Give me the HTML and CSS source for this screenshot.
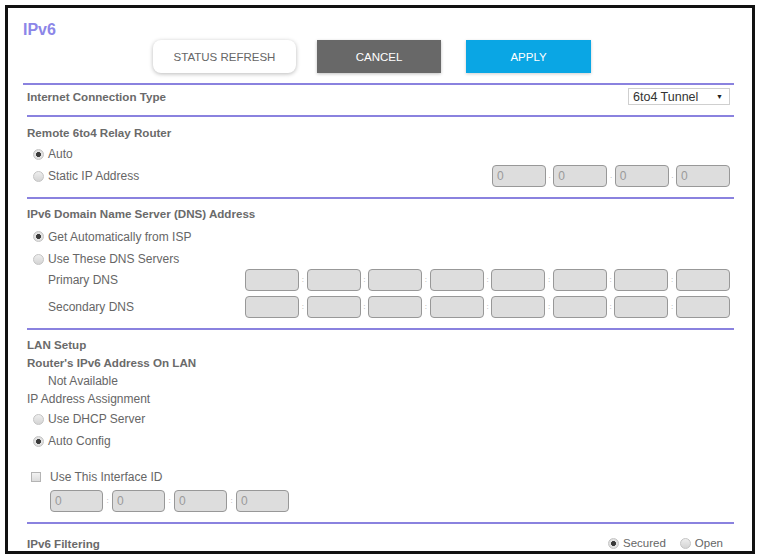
FILE: index.html
```html
<!DOCTYPE html>
<html>
<head>
<meta charset="utf-8">
<link rel="stylesheet" href="styles.css">
</head>
<body>
<div class="frame">
  <div class="page">
    <h1 class="title">IPv6</h1>
    <div class="actions">
      <button class="btn btn-refresh">STATUS REFRESH</button>
      <button class="btn btn-cancel">CANCEL</button>
      <button class="btn btn-apply">APPLY</button>
    </div>
    <div class="rule rule-first"></div>
    <div class="row row-ict">
      <span class="hd">Internet Connection Type</span>
      <div class="select"><span>6to4 Tunnel</span><span class="caret">&#9660;</span></div>
    </div>
    <div class="rule"></div>

    <section class="sec sec-relay">
      <div class="row"><span class="hd">Remote 6to4 Relay Router</span></div>
      <div class="row opt"><span class="radio on"></span>Auto</div>
      <div class="row opt"><span class="radio"></span>Static IP Address
        <div class="ipgroup ip4">
          <span class="field">0</span><span class="sep">.</span>
          <span class="field">0</span><span class="sep">.</span>
          <span class="field">0</span><span class="sep">.</span>
          <span class="field">0</span>
        </div>
      </div>
    </section>
    <div class="rule"></div>

    <section class="sec sec-dns">
      <div class="row"><span class="hd">IPv6 Domain Name Server (DNS) Address</span></div>
      <div class="row opt h25"><span class="radio on"></span>Get Automatically from ISP</div>
      <div class="row opt h20"><span class="radio"></span>Use These DNS Servers</div>
      <div class="row sub">Primary DNS
        <div class="ipgroup ip8">
          <span class="field"></span><span class="sep">:</span>
          <span class="field"></span><span class="sep">:</span>
          <span class="field"></span><span class="sep">:</span>
          <span class="field"></span><span class="sep">:</span>
          <span class="field"></span><span class="sep">:</span>
          <span class="field"></span><span class="sep">:</span>
          <span class="field"></span><span class="sep">:</span>
          <span class="field"></span>
        </div>
      </div>
      <div class="row sub sec-row">Secondary DNS
        <div class="ipgroup ip8">
          <span class="field"></span><span class="sep">:</span>
          <span class="field"></span><span class="sep">:</span>
          <span class="field"></span><span class="sep">:</span>
          <span class="field"></span><span class="sep">:</span>
          <span class="field"></span><span class="sep">:</span>
          <span class="field"></span><span class="sep">:</span>
          <span class="field"></span><span class="sep">:</span>
          <span class="field"></span>
        </div>
      </div>
    </section>
    <div class="rule"></div>

    <section class="sec sec-lan">
      <div class="line hd">LAN Setup</div>
      <div class="line hd">Router's IPv6 Address On LAN</div>
      <div class="line indent">Not Available</div>
      <div class="line">IP Address Assignment</div>
      <div class="row opt"><span class="radio"></span>Use DHCP Server</div>
      <div class="row opt"><span class="radio on"></span>Auto Config</div>
      <div class="row check-row"><span class="checkbox"></span>Use This Interface ID</div>
      <div class="row iid-row">
        <div class="ipgroup iid">
          <span class="field">0</span><span class="sep">:</span>
          <span class="field">0</span><span class="sep">:</span>
          <span class="field">0</span><span class="sep">:</span>
          <span class="field">0</span>
        </div>
      </div>
    </section>
    <div class="rule"></div>

    <section class="sec sec-filter">
      <div class="row">
        <span class="hd">IPv6 Filtering</span>
        <div class="choices">
          <span class="radio on"></span><span class="choice">Secured</span>
          <span class="radio"></span><span class="choice">Open</span>
        </div>
      </div>
    </section>
  </div>
</div>
</body>
</html>
```

FILE: styles.css
```css
html, body {
  margin: 0;
  padding: 0;
  background: #ffffff;
}

body {
  font-family: "Liberation Sans", Arial, sans-serif;
  color: #666666;
  font-size: 12px;
}

.frame {
  box-sizing: border-box;
  width: 750px;
  height: 549px;
  margin: 5px 0 0 5px;
  border: 3px solid #111111;
  overflow: hidden;
  background: #ffffff;
}

.page {
  padding: 0 18px 0 19px;
}

.title {
  margin: 0 0 0 -4px;
  padding-top: 12px;
  font-size: 16px;
  line-height: 20px;
  font-weight: bold;
  color: #8c86e8;
}

.actions {
  display: flex;
  height: 33px;
  margin-left: 126px;
}

.btn {
  box-sizing: border-box;
  height: 33px;
  border: 0;
  padding: 0;
  font-family: "Liberation Sans", Arial, sans-serif;
  font-size: 11.5px;
}

.btn-refresh {
  width: 143px;
  background: #ffffff;
  color: #666666;
  border-radius: 8px;
  box-shadow: 0 1px 4px rgba(0, 0, 0, 0.28);
}

.btn-cancel {
  width: 124px;
  margin-left: 21px;
  background: #686868;
  color: #ffffff;
  box-shadow: 0 1px 3px rgba(0, 0, 0, 0.25);
}

.btn-apply {
  width: 125px;
  margin-left: 25px;
  background: #0aa6e4;
  color: #ffffff;
  box-shadow: 0 1px 3px rgba(0, 0, 0, 0.2);
}

.rule {
  height: 2px;
  background: #8a82df;
}

.rule-first {
  margin: 10px 0 0 -4px;
}

.row {
  display: flex;
  align-items: center;
  height: 22px;
  white-space: nowrap;
}

.hd {
  font-weight: bold;
  font-size: 11.6px;
  color: #6a6a6a;
}

.row-ict {
  height: 23px;
  margin-bottom: 7px;
  justify-content: space-between;
}

.select {
  box-sizing: border-box;
  width: 102px;
  height: 17px;
  margin-right: 4px;
  border: 1px solid #cfcfcf;
  background: #ffffff;
  display: flex;
  align-items: center;
  justify-content: space-between;
  padding: 0 6px 0 4px;
  font-size: 12.5px;
  color: #333333;
}

.caret {
  font-size: 7px;
  color: #222222;
}

.sec-relay {
  padding: 4px 0 10px;
}

.sec-dns {
  padding: 3px 0 10px;
}

.sec-lan {
  padding: 6px 0 10px;
}

.sec-filter {
  padding-top: 8px;
}

.sec-filter .row {
  justify-content: space-between;
}

.opt {
  padding-left: 6px;
}

.h25 {
  height: 25px;
}

.h20 {
  height: 20px;
}

.sub {
  padding-left: 21px;
}

.sec-row {
  margin-top: 5px;
}

.radio {
  box-sizing: border-box;
  width: 11px;
  height: 11px;
  margin-right: 4px;
  border-radius: 50%;
  border: 1px solid #c4c4c4;
  background: linear-gradient(#eeeeee, #d4d4d4);
  flex: none;
}

.radio.on {
  background: radial-gradient(circle, #3a3a3a 0, #3a3a3a 2.2px, #e4e4e4 2.8px, #d8d8d8 100%);
}

.ipgroup {
  display: flex;
  align-items: center;
  margin-left: auto;
  margin-right: 4px;
}

.field {
  box-sizing: border-box;
  height: 22px;
  width: 54px;
  border: 1px solid #989898;
  border-radius: 4px;
  background: #dddddd;
  color: #9a9a9a;
  font-size: 12px;
  line-height: 20px;
  padding-left: 4px;
}

.sep {
  width: 7.33px;
  text-align: center;
  color: #aaaaaa;
  font-size: 8px;
  line-height: 22px;
  align-self: flex-end;
}

.ip8 .sep {
  width: 7.57px;
}

.line {
  height: 18px;
  line-height: 18px;
}

.indent {
  padding-left: 21px;
}

.check-row {
  margin-top: 14px;
}

.checkbox {
  box-sizing: border-box;
  width: 10px;
  height: 10px;
  margin: 0 9px 0 4px;
  border: 1px solid #b4b4b4;
  background: linear-gradient(#f2f2f2, #dcdcdc);
  flex: none;
}

.iid-row {
  margin-top: 2px;
  padding-left: 23px;
}

.iid {
  margin-left: 0;
}

.iid .field {
  width: 53px;
}

.iid .sep {
  width: 9px;
}

.choices {
  display: flex;
  align-items: center;
  margin-right: 11px;
  font-size: 11.5px;
}

.choice {
  margin-right: 14px;
}

.choice:last-child {
  margin-right: 0;
}
```
